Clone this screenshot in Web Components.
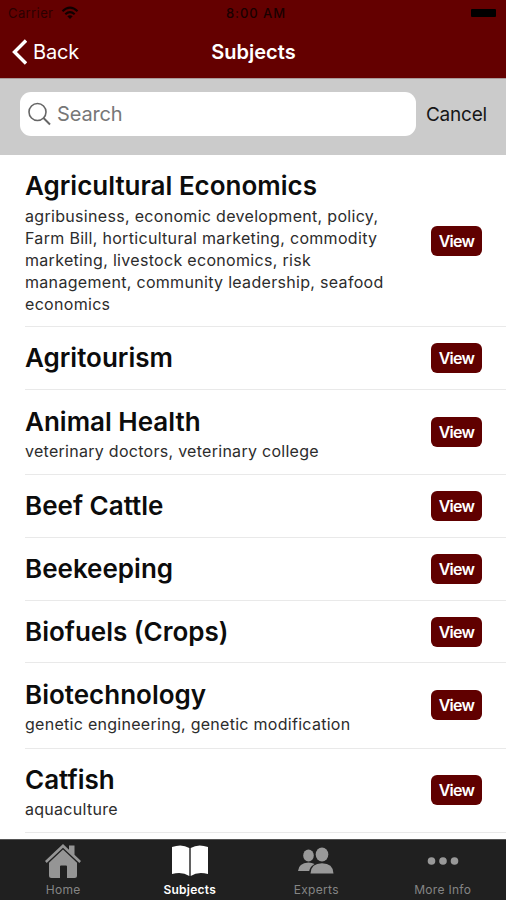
<!DOCTYPE html>
<html lang="en">
<head>
<meta charset="utf-8">
<title>Subjects</title>
<style>
html, body { margin: 0; height: 100%; overflow: hidden; }
body { font-family: Inter, "Liberation Sans", sans-serif; background: #fff; color: #111; }
</style>
</head>
<body>
<subjects-app></subjects-app>
<script>
const define = (name, html, init) => {
  const template = document.createElement('template');
  template.innerHTML = html;
  customElements.define(name, class extends HTMLElement {
    constructor() {
      super();
      this.attachShadow({ mode: 'open' }).append(template.content.cloneNode(true));
    }
    connectedCallback() { if (init) init(this, this.shadowRoot); }
  });
};

define('status-bar', `
<style>
:host { display: grid; grid-template-columns: 1fr auto 1fr; align-items: center; height: 26px; padding: 0 10px 0 8px; color: #190000; font-size: 13px; box-sizing: border-box; }
.left { display: flex; align-items: center; gap: 8px; letter-spacing: .4px; color: #2b0000; }
.time { font-weight: 500; letter-spacing: .95px; padding-left: 8px; }
.battery { justify-self: end; width: 25px; height: 8px; background: #000; border-radius: 1px; }
svg { display: block; }
</style>
<div class="left"><span>Carrier</span>
<svg width="18" height="14" viewBox="0 0 18 14" fill="none" stroke="#100000" stroke-width="2.2"><path d="M1.5 5.2Q9-1.8 16.500 5.2M4.300 8.200Q9 4 13.700 8.200"/><path d="M9 13L6.300 10.300Q9 8.300 11.700 10.300Z" fill="#100000" stroke="none"/></svg></div>
<span class="time">8:00 AM</span><span class="battery"></span>`);

define('nav-bar', `
<style>
:host { display: grid; grid-template-columns: 1fr auto 1fr; align-items: center; height: 52px; padding: 0 12px; box-sizing: border-box; color: #fff; font-size: 20px; }
.back { display: flex; align-items: center; gap: 6px; letter-spacing: -.2px; }
.title { font-weight: 600; padding-left: 1px; }
svg { display: block; }
</style>
<div class="back"><svg width="15" height="26" viewBox="0 0 15 26" fill="none" stroke="#fff" stroke-width="3.400"><path d="M14 1.500L2.500 13L14 24.500"/></svg><span>Back</span></div>
<span class="title"><slot></slot></span><span></span>`);

define('search-bar', `
<style>
:host { display: flex; align-items: center; height: 77px; padding: 0 19px 0 20px; box-sizing: border-box; background: #cbcbcb; border-top: 1px solid #a99; }
.field { display: flex; align-items: center; gap: 6px; flex: 1; height: 44px; margin-bottom: 6px; border-radius: 11px; background: #fff; padding-left: 8px; box-sizing: border-box; color: #777; font-size: 20px; letter-spacing: -.15px; }
.cancel { margin: 0 0 5px 10px; font-size: 19px; color: #161616; letter-spacing: -.2px; }
svg { display: block; }
</style>
<div class="field"><svg width="23" height="24" viewBox="0 0 23 24" fill="none" stroke="#666" stroke-width="1.600"><circle cx="9.500" cy="10" r="8.500"/><path d="M15.500 16L22 22.500" stroke-width="2"/></svg><span>Search</span></div>
<span class="cancel">Cancel</span>`);

define('view-button', `
<style>
:host { display: flex; align-items: center; justify-content: center; width: 51px; height: 30px; border-radius: 6px; background: #600000; color: #fff; font-size: 16px; font-weight: 600; letter-spacing: -.7px; box-sizing: border-box; }
</style><slot></slot>`);

define('subject-row', `
<style>
:host { display: flex; align-items: center; justify-content: space-between; margin-left: 25px; padding-right: 24px; height: var(--h, 63px); box-sizing: border-box; border-bottom: 1px solid #e9e9e9; flex: none; }
.name { font-size: 26px; line-height: 32px; font-weight: 600; color: #0c0c0c; }
.detail { margin: 3px 0 -4px; font-size: 16px; line-height: 22px; color: #2c2c2c; letter-spacing: .31px; white-space: pre-line; }
.detail:empty { display: none; }
:host([short]) .detail { margin: 2px 0 -3px; letter-spacing: .28px; }
view-button { margin-bottom: var(--lift, 0); }
</style>
<div><div class="name"><slot></slot></div><div class="detail"></div></div>
<view-button>View</view-button>`,
(el, root) => { root.querySelector('.detail').textContent = el.getAttribute('detail') || ''; });

define('tab-item', `
<style>
:host { display: flex; flex-direction: column; align-items: center; flex: 1; color: #858585; font-size: 12px; letter-spacing: .3px; padding-top: 4px; }
:host([active]) { color: #fff; font-weight: 600; letter-spacing: .25px; }
.icon { height: 34px; flex: none; display: flex; align-items: center; }
span { line-height: 20px; margin-top: 2px; }
</style>
<div class="icon"><slot name="icon"></slot></div><span><slot></slot></span>`);

define('tab-bar', `
<style>
:host { display: flex; height: 61px; box-sizing: border-box; border-top: 1px solid #555; background: #202020; flex: none; }
svg { display: block; }
</style>
<tab-item><svg slot="icon" width="36" height="34" viewBox="0 0 36 34" fill="#959595"><path d="M18 0L24 5.800V1.500H29.500V10.800L36 17L34.300 19L18 3.700L1.700 19L0 17Z"/><path d="M18 5.500L32 18.800V31.500Q32 34 29.500 34H22V22.500Q22 21.500 21 21.500H16Q15 21.500 15 22.500V34H6.500Q4 34 4 31.500V18.800Z"/></svg>Home</tab-item>
<tab-item active><svg slot="icon" width="36" height="32" viewBox="0 0 36 32" fill="#fff"><path d="M0 2Q10-1.500 17.300 3V31Q10 26 0 29Z"/><path d="M36 2Q26-1.500 18.700 3V31Q26 26 36 29Z"/></svg>Subjects</tab-item>
<tab-item><svg slot="icon" width="36" height="28" viewBox="0 0 36 28" fill="#999"><ellipse cx="10.500" cy="8.500" rx="5.300" ry="6"/><path d="M0 24Q.5 16 10.500 15.500Q14 15.600 16.500 17Q12 19.500 11.200 24Z"/><ellipse cx="24" cy="7.500" rx="6.300" ry="7"/><path d="M12.500 26.500Q13 16.300 24 16.300Q35 16.300 35.500 26.500Z"/></svg>Experts</tab-item>
<tab-item><svg slot="icon" width="32" height="10" viewBox="0 0 32 10" fill="#999"><circle cx="4.500" cy="5" r="3.800"/><circle cx="16" cy="5" r="3.800"/><circle cx="27.500" cy="5" r="3.800"/></svg>More Info</tab-item>`);

define('subjects-app', `
<style>
:host { display: flex; flex-direction: column; height: 900px; width: 506px; }
header { background: #640000; flex: none; }
search-bar { flex: none; }
main { flex: 1; min-height: 0; overflow: hidden; display: flex; flex-direction: column; }
</style>
<header><status-bar></status-bar><nav-bar>Subjects</nav-bar></header>
<search-bar></search-bar>
<main>
<subject-row style="--h:172px" detail="agribusiness, economic development, policy,
Farm Bill, horticultural marketing, commodity
marketing, livestock economics, risk
management, community leadership, seafood
economics">Agricultural Economics</subject-row>
<subject-row>Agritourism</subject-row>
<subject-row short style="--h:85px" detail="veterinary doctors, veterinary college">Animal Health</subject-row>
<subject-row>Beef Cattle</subject-row>
<subject-row>Beekeeping</subject-row>
<subject-row style="--h:62px">Biofuels (Crops)</subject-row>
<subject-row short style="--h:86px;--lift:2px" detail="genetic engineering, genetic modification">Biotechnology</subject-row>
<subject-row short style="--h:84px;--lift:2px" detail="aquaculture">Catfish</subject-row>
</main>
<tab-bar></tab-bar>`);
</script>
</body>
</html>
